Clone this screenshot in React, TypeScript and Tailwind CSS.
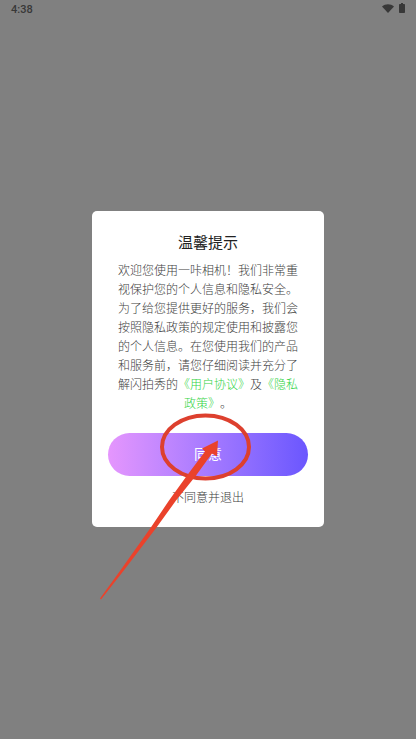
import { type ReactNode } from "react";

const FONT = "font-['Roboto','Noto_Sans_CJK_SC',sans-serif]";

export default function App() {
    return (
        <div className={`relative flex min-h-screen flex-col bg-[#808080] ${FONT}`}>
            <StatusBar />
            <main className="flex flex-1 items-center justify-center pb-[21px]">
                <ConsentDialog />
            </main>
            <PointerMark />
        </div>
    );
}

function StatusBar() {
    return (
        <header className="flex h-5 items-center justify-between px-[11px] text-[#383838]">
            <span className="text-[11px] leading-5 font-medium">4:38</span>
            <div className="flex items-center gap-[5px] pb-1">
                <svg width="12" height="10" viewBox="0 0 12 10" fill="currentColor" aria-hidden="true">
                    <path d="M0 3.6C3.4.6 8.6.6 12 3.6L6 10Z" />
                </svg>
                <svg width="6" height="10" viewBox="0 0 6 10" fill="currentColor" aria-hidden="true">
                    <path d="M2 0h2v1h1.2q.8 0 .8.8v7.4q0 .8-.8.8H.8Q0 10 0 9.2V1.8Q0 1 .8 1H2Z" />
                </svg>
            </div>
        </header>
    );
}

function PolicyLink({ children }: { children: ReactNode }) {
    return (
        <a href="#" className="text-[#32d444]">
            {children}
        </a>
    );
}

function ConsentDialog() {
    return (
        <section
            role="dialog"
            aria-labelledby="consent-title"
            className="flex w-[232px] flex-col items-center rounded-[5px] bg-white px-4 pt-5 pb-[19px]"
        >
            <h1 id="consent-title" className="text-[15px] leading-6 text-[#222222]">
                温馨提示
            </h1>
            <p className="mt-[7px] px-[6px] text-center text-[12px] leading-[19px] font-light text-[#404040] [text-spacing-trim:space-all]">
                欢迎您使用一咔相机！我们非常重视保护您的个人信息和隐私安全。为了给您提供更好的服务，我们会按照隐私政策的规定使用和披露您的个人信息。在您使用我们的产品和服务前，请您仔细阅读并充分了解闪拍秀的
                <PolicyLink>《用户协议》</PolicyLink>及<PolicyLink>《隐私政策》</PolicyLink>。
            </p>
            <button
                type="button"
                className="mt-[19px] h-[43px] w-full rounded-full bg-linear-to-r from-[#e596fd] to-[#6b56fe] text-[14px] text-white"
            >
                同意
            </button>
            <button type="button" className="mt-3 text-[12px] leading-5 font-light text-[#404040]">
                不同意并退出
            </button>
        </section>
    );
}

// hand-drawn circle and arrow pointing at the agree button
function PointerMark() {
    return (
        <svg
            className="pointer-events-none absolute top-1/2 left-1/2 -translate-x-1/2 -translate-y-1/2"
            width="416"
            height="739"
            viewBox="0 0 416 739"
            aria-hidden="true"
        >
            <ellipse cx="205.5" cy="446.5" rx="43.5" ry="31.5" fill="none" stroke="#dd402e" strokeWidth="4" />
            <path
                d="M218 440L202 448L205 451L187 475L169 500L151.5 526L121 569L100 598L101 599L123 571L156.5 527L176 500L196 475L212 453L217 456Z"
                fill="#ea422b"
            />
        </svg>
    );
}
